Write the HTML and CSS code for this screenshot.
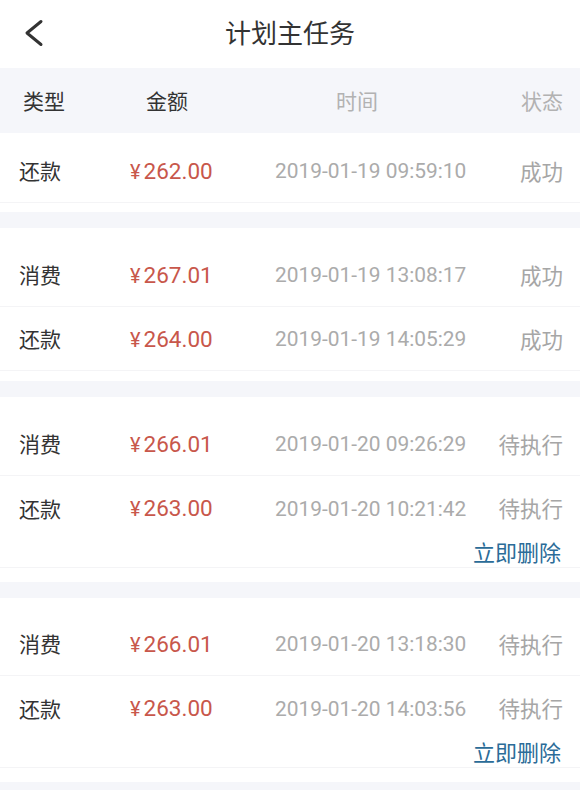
FILE: index.html
```html
<!DOCTYPE html>
<html lang="zh">
<head>
<meta charset="utf-8">
<title>计划主任务</title>
<link rel="stylesheet" href="styles.css">
</head>
<body>
<div class="page">
  <header class="nav">
    <div class="nav-back">
      <svg width="22" height="28" viewBox="0 0 22 28" aria-hidden="true">
        <polyline points="18,2.5 4,14 18,25.5" fill="none" stroke="#333" stroke-width="3" stroke-linecap="round" stroke-linejoin="round"/>
      </svg>
    </div>
    <div class="nav-title">计划主任务</div>
    <div></div>
  </header>

  <div class="thead">
    <span class="th th-dark">类型</span>
    <span class="th th-dark">金额</span>
    <span class="th th-light">时间</span>
    <span class="th th-light th-right">状态</span>
  </div>

  <div class="list">
    <section class="group group-first">
      <div class="row">
        <span class="c-type">还款</span>
        <span class="c-amt"><span class="yen">¥</span>262.00</span>
        <span class="c-time">2019-01-19 09:59:10</span>
        <span class="c-status">成功</span>
      </div>
    </section>

    <section class="group">
      <div class="row">
        <span class="c-type">消费</span>
        <span class="c-amt"><span class="yen">¥</span>267.01</span>
        <span class="c-time">2019-01-19 13:08:17</span>
        <span class="c-status">成功</span>
      </div>
      <div class="row">
        <span class="c-type">还款</span>
        <span class="c-amt"><span class="yen">¥</span>264.00</span>
        <span class="c-time">2019-01-19 14:05:29</span>
        <span class="c-status">成功</span>
      </div>
    </section>

    <section class="group group-action">
      <div class="row">
        <span class="c-type">消费</span>
        <span class="c-amt"><span class="yen">¥</span>266.01</span>
        <span class="c-time">2019-01-20 09:26:29</span>
        <span class="c-status">待执行</span>
      </div>
      <div class="row">
        <span class="c-type">还款</span>
        <span class="c-amt"><span class="yen">¥</span>263.00</span>
        <span class="c-time">2019-01-20 10:21:42</span>
        <span class="c-status">待执行</span>
      </div>
      <div class="actions"><span class="del">立即删除</span></div>
    </section>

    <section class="group group-action">
      <div class="row">
        <span class="c-type">消费</span>
        <span class="c-amt"><span class="yen">¥</span>266.01</span>
        <span class="c-time">2019-01-20 13:18:30</span>
        <span class="c-status">待执行</span>
      </div>
      <div class="row">
        <span class="c-type">还款</span>
        <span class="c-amt"><span class="yen">¥</span>263.00</span>
        <span class="c-time">2019-01-20 14:03:56</span>
        <span class="c-status">待执行</span>
      </div>
      <div class="actions"><span class="del">立即删除</span></div>
    </section>
  </div>
</div>
</body>
</html>
```
FILE: styles.css
```css
* { box-sizing: border-box; }
html, body { margin: 0; padding: 0; }
body {
  background: #f5f6fa;
  font-family: Roboto, "Noto Sans CJK SC", sans-serif;
  color: #333;
}
.page { width: 580px; min-height: 790px; background: #f5f6fa; }

.nav {
  height: 68px;
  background: #fff;
  display: grid;
  grid-template-columns: 70px 1fr 70px;
  align-items: center;
}
.nav-back { padding-left: 23px; display: flex; align-items: center; padding-bottom: 2px; }
.nav-back svg { display: block; }
.nav-title {
  text-align: center;
  font-size: 26px;
  color: #333;
  font-family: "Noto Sans CJK SC", sans-serif;
  line-height: 1;
  padding-bottom: 5px;
}

.thead {
  height: 65px;
  background: #f5f6fa;
  display: grid;
  grid-template-columns: 123px 190px 1fr auto;
  align-items: center;
  padding: 0 17px 0 23px;
}
.th { font-size: 21px; font-family: "Noto Sans CJK SC", sans-serif; line-height: 1; }
.th-dark { color: #333; }
.th-light { color: #b2b2b2; }
.th-right { text-align: right; }

.list { display: flex; flex-direction: column; gap: 16px; padding-bottom: 9px; }
.group { background: #fff; padding: 15px 0 10px; }
.group-first { padding: 6px 0 9px; }
.group-action { padding-bottom: 0; }
.group-action + .group-action { padding-top: 14px; }

.row {
  height: 64px;
  display: grid;
  grid-template-columns: 111px 145px 1fr auto;
  align-items: center;
  padding: 0 17px 0 19px;
  border-bottom: 1px solid #f4f4f6;
}
.c-type { font-size: 21px; color: #333; font-family: "Noto Sans CJK SC", sans-serif; line-height: 1; }
.c-amt { font-size: 22.5px; color: #c8574b; line-height: 1; padding-top: 1px; }
.yen { font-size: 20px; margin-right: 3px; }
.c-time { font-size: 20.9px; color: #ababab; line-height: 1; padding-top: 2px; }
.c-status { font-size: 21.5px; color: #a6a6a6; text-align: right; font-family: "Noto Sans CJK SC", sans-serif; line-height: 1; }

.actions {
  height: 28px;
  display: flex;
  justify-content: flex-end;
  align-items: center;
  padding-right: 19px;
  margin-bottom: 14px;
  border-bottom: 1px solid #f4f4f6;
}
.group-action .row:nth-child(2) { border-bottom: none; }
.del { font-size: 22px; color: #2b6c98; font-family: "Noto Sans CJK SC", sans-serif; line-height: 1; padding-bottom: 5px; }
```
